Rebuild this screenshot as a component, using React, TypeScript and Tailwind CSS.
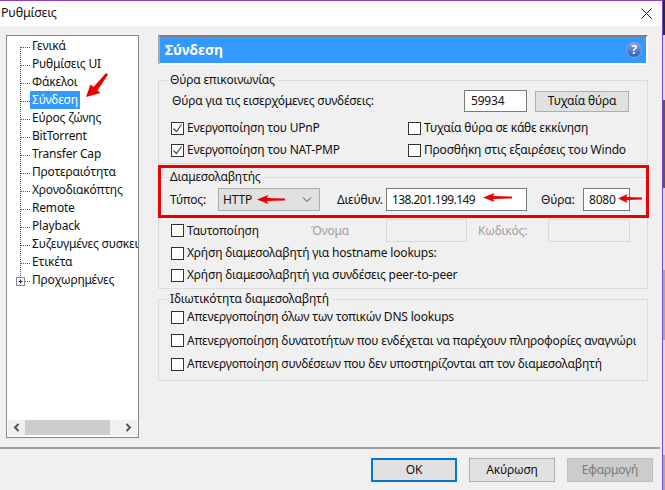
import { ReactNode } from "react";

const treeItems = [
  "Γενικά",
  "Ρυθμίσεις UI",
  "Φάκελοι",
  "Σύνδεση",
  "Εύρος ζώνης",
  "BitTorrent",
  "Transfer Cap",
  "Προτεραιότητα",
  "Χρονοδιακόπτης",
  "Remote",
  "Playback",
  "Συζευγμένες συσκευές",
  "Ετικέτα",
  "Προχωρημένες",
];

function Connector({ first, last, plus }: { first?: boolean; last?: boolean; plus?: boolean }) {
  return (
    <svg width="19" height="18" className="shrink-0" stroke="#555" fill="none">
      <line x1="6.5" y1={first ? 10 : 0} x2="6.5" y2={last ? 10 : 18} strokeDasharray="1 1" />
      <line x1="7" y1="10.5" x2="17" y2="10.5" strokeDasharray="1 1" />
      {plus && (
        <>
          <rect x="2.5" y="6.5" width="8" height="8" fill="#f4f4f8" stroke="#8a8a96" />
          <path d="M4.500 10.500h4M6.500 8.500v4" stroke="#20205a" />
        </>
      )}
    </svg>
  );
}

function Checkbox({ label, checked, className }: { label: string; checked?: boolean; className?: string }) {
  return (
    <div className={`flex items-center gap-[2px] whitespace-nowrap overflow-hidden ${className ?? ""}`}>
      <span className="w-[13px] h-[13px] shrink-0 border border-[#333] bg-white flex items-center justify-center">
        {checked && (
          <svg width="11" height="11" viewBox="0 0 11 11" fill="none" stroke="#444" strokeWidth="1.2">
            <path d="M1.500 5.500l3 3 5-7" />
          </svg>
        )}
      </span>
      <span className="ml-px">{label}</span>
    </div>
  );
}

function Field({ children, className }: { children?: ReactNode; className: string }) {
  return (
    <div className={`h-[23px] border border-[#7a7a7a] bg-white flex items-center ${className}`}>
      {children}
    </div>
  );
}

function Group({ title, className, children }: { title: string; className: string; children: ReactNode }) {
  return (
    <fieldset className={`border border-[#dcdcdc] min-w-0 ${className}`}>
      <legend className="ml-[8px] px-[3px] h-[17px] leading-[16px]">{title}</legend>
      {children}
    </fieldset>
  );
}

function Arrow({ className }: { className: string }) {
  return (
    <svg viewBox="0 0 30 9" preserveAspectRatio="none" className={`absolute h-[9px] ${className}`}>
      <path d="M0 4.500L12 0l-1.500 3L30 3.500v2L10.500 6 12 9z" fill="#ee0000" />
    </svg>
  );
}

function FooterButton({ children, className }: { children: string; className: string }) {
  return (
    <button className={`w-[86px] h-[24px] flex items-center justify-center ${className}`}>{children}</button>
  );
}

export default function App() {
  return (
    <div className="relative w-[665px] h-[490px] overflow-hidden flex bg-[#e8e8e8] text-[12px] tracking-[-0.19px] leading-none text-[#111] font-['Noto_Sans','Open_Sans',sans-serif]">
      <div className="w-[662px] h-full flex flex-col bg-[#f0f0f0] border-t border-[#8a3fc8]">
        {/* title bar */}
        <div className="h-[25px] bg-white flex items-center justify-between pl-px pr-[10px]">
          <span className="text-[12.5px]">Ρυθμίσεις</span>
          <svg width="11" height="11" viewBox="0 0 11 11" stroke="#222" fill="none">
            <path d="M.5.5l10 10M10.500.5l-10 10" />
          </svg>
        </div>

        <div className="flex-1 flex pt-[9px] pl-[6px] gap-[19px] min-h-0">
          {/* settings tree */}
          <div className="w-[133px] h-[403px] border border-[#828790] bg-white flex flex-col shrink-0">
            <div className="flex-1 pt-[1px] pl-[7px] overflow-hidden">
              {treeItems.map((item, i) => (
                <div key={item} className="h-[18px] flex items-center whitespace-nowrap">
                  <Connector first={i === 0} last={i === treeItems.length - 1} plus={i === treeItems.length - 1} />
                  <span
                    className={`h-[18px] flex items-center px-[2px] -ml-[3px] ${item === "Σύνδεση" ? "bg-[#3399ff] text-white" : ""}`}
                  >
                    {item}
                  </span>
                </div>
              ))}
            </div>
            <div className="h-[15px] mx-px mb-[2px] bg-[#f0f0f0] flex items-center shrink-0">
              <div className="w-[17px] flex justify-center">
                <svg width="7" height="9" viewBox="0 0 7 9" fill="none" stroke="#555" strokeWidth="2">
                  <path d="M5.500 1L2 4.500 5.500 8" />
                </svg>
              </div>
              <div className="w-[85px] h-full bg-[#cdcdcd]" />
              <div className="flex-1 flex justify-end pr-[5px]">
                <svg width="7" height="9" viewBox="0 0 7 9" fill="none" stroke="#555" strokeWidth="2">
                  <path d="M1.500 1L5 4.500 1.500 8" />
                </svg>
              </div>
            </div>
          </div>

          {/* connection panel */}
          <div className="w-[490px] flex flex-col">
            <div className="h-[30px] shrink-0 bg-[#3399ff] border-2 border-t-[#808080] border-l-[#a8a8a8] border-r-white border-b-white flex items-center justify-between pl-[5px] pr-[4px]">
              <span className="text-[14px] tracking-normal font-bold text-white">Σύνδεση</span>
              <span className="w-[16px] h-[16px] rounded-full bg-gradient-to-b from-[#7fa0dc] to-[#2f62ba] border border-[#7fa5e6] text-white font-bold text-[12px] flex items-center justify-center">
                ?
              </span>
            </div>

            <Group title="Θύρα επικοινωνίας" className="mt-[7px] h-[92px]">
              <div className="flex items-center justify-between pl-[13px] pr-[18px] mt-px h-[22px]">
                <span>Θύρα για τις εισερχόμενες συνδέσεις:</span>
                <div className="flex items-center gap-[8px]">
                  <div className="w-[63px] h-[22px] border border-[#7a7a7a] bg-white flex items-center pl-[6px]">59934</div>
                  <button className="w-[94px] h-[21px] bg-[#e1e1e1] border border-[#adadad] flex items-center justify-center">
                    Τυχαία θύρα
                  </button>
                </div>
              </div>
              <div className="grid grid-cols-[237px_218px] pl-[12px] mt-[5px]">
                <Checkbox checked label="Ενεργοποίηση του UPnP" className="h-[22px]" />
                <Checkbox label="Τυχαία θύρα σε κάθε εκκίνηση" className="h-[22px]" />
                <Checkbox checked label="Ενεργοποίηση του NAT-PMP" className="h-[22px]" />
                <Checkbox label="Προσθήκη στις εξαιρέσεις του Windows Firewall" className="h-[22px]" />
              </div>
            </Group>

            <Group title="Διαμεσολαβητής" className="mt-[5px] h-[120px]">
              <div className="flex items-center mt-[2px] pl-[11px] h-[23px]">
                <span className="w-[48px]">Τύπος:</span>
                <div className="w-[102px] h-[23px] bg-[#e1e1e1] border border-[#adadad] flex items-center justify-between pl-[4px] pr-[7px]">
                  <span>HTTP</span>
                  <svg width="10" height="6" viewBox="0 0 10 6" fill="none" stroke="#444">
                    <path d="M1 .5l4 4 4-4" />
                  </svg>
                </div>
                <span className="ml-[17px] w-[49px]">Διεύθυν.</span>
                <Field className="w-[141px] pl-[5px] tracking-[-0.6px]">138.201.199.149</Field>
                <span className="ml-[14px] w-[42px]">Θύρα:</span>
                <Field className="w-[47px] pl-[5px]">8080</Field>
              </div>
              <div className="flex items-center mt-[8px] pl-[12px] h-[23px]">
                <Checkbox label="Ταυτοποίηση" className="w-[140px] h-[22px]" />
                <span className="w-[75px] text-[#a0a0a0]">Όνομα</span>
                <div className="w-[81px] h-[23px] border border-[#d9d9d9]" />
                <span className="ml-[11px] w-[70px] text-[#a0a0a0]">Κωδικός:</span>
                <div className="w-[82px] h-[23px] border border-[#d9d9d9]" />
              </div>
              <Checkbox label="Χρήση διαμεσολαβητή για hostname lookups:" className="h-[22px] pl-[12px]" />
              <Checkbox label="Χρήση διαμεσολαβητή για συνδέσεις peer-to-peer" className="h-[22px] pl-[12px]" />
            </Group>

            <Group title="Ιδιωτικότητα διαμεσολαβητή" className="mt-[2px] h-[90px]">
              <div className="flex flex-col gap-[3.5px] -mt-px pl-[12px] pr-[11px]">
                <Checkbox label="Απενεργοποίηση όλων των τοπικών DNS lookups" className="h-[20px]" />
                <Checkbox label="Απενεργοποίηση δυνατοτήτων που ενδέχεται να παρέχουν πληροφορίες αναγνώρισης" className="h-[20px]" />
                <Checkbox label="Απενεργοποίηση συνδέσεων που δεν υποστηρίζονται απ τον διαμεσολαβητή" className="h-[20px]" />
              </div>
            </Group>
          </div>
        </div>

        {/* footer buttons */}
        <div className="h-[43px] shrink-0 border-t-2 border-[#a0a0a0] mr-[2px] flex items-start justify-end gap-[12px] pt-[9px] pr-[7px]">
          <FooterButton className="bg-[#e1e1e1] border-2 border-[#0078d7]">OK</FooterButton>
          <FooterButton className="bg-[#e1e1e1] border border-[#adadad]">Ακύρωση</FooterButton>
          <FooterButton className="bg-[#cccccc] border border-[#bfbfbf] text-[#7a7a7a]">Εφαρμογή</FooterButton>
        </div>
      </div>

      {/* window edge, desktop showing behind it */}
      <div className="w-[1px] h-full bg-[#8a3fc8] shrink-0" />
      <div className="flex-1 h-full flex flex-col">
        <div className="h-[35px] bg-[#1c2c4c]" />
        <div className="h-[65px] bg-[#dcdcdc]" />
        <div className="h-[88px] bg-[#4c5c5e]" />
        <div className="h-[82px] bg-[#d8d8d8]" />
        <div className="h-[70px] bg-[#a8a8a8]" />
        <div className="h-[115px] bg-[#dcdcdc]" />
        <div className="flex-1 bg-[#a8a8a8]" />
      </div>

      {/* red annotations drawn over the screenshot */}
      <div className="absolute left-[158px] top-[165px] w-[491px] h-[53px] border-[3px] border-[#ee0000]" />
      <svg width="30" height="32" viewBox="0 0 30 32" className="absolute left-[84px] top-[70px]">
        <path d="M2 27L6.500 14.500 9.500 17 22 3l2 1.500-10.500 16 3 2.500z" fill="#ee0000" />
      </svg>
      <Arrow className="left-[257px] top-[195px] w-[28px]" />
      <Arrow className="left-[483px] top-[193px] w-[29px]" />
      <Arrow className="left-[618px] top-[194px] w-[24px]" />
    </div>
  );
}
